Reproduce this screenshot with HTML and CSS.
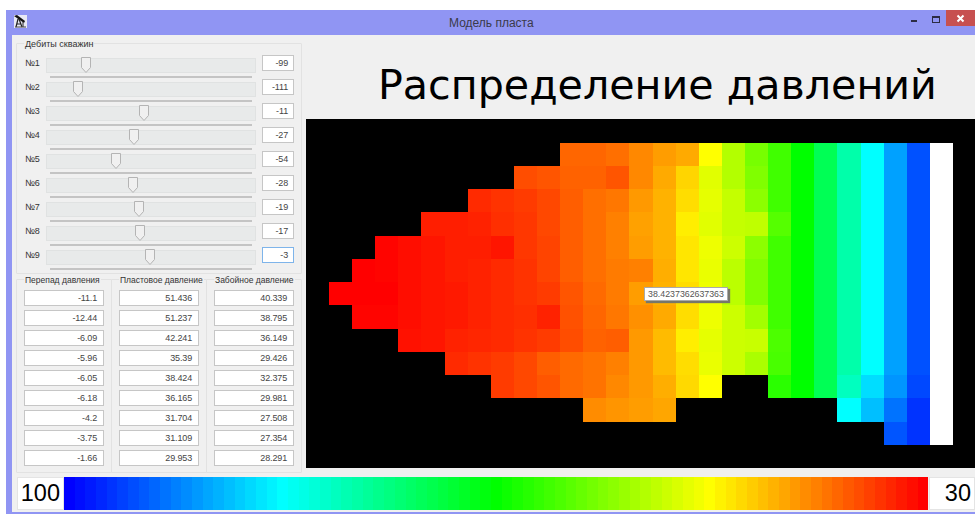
FILE: index.html
```html
<!DOCTYPE html>
<html lang="ru">
<head>
<meta charset="utf-8">
<title>Модель пласта</title>
<link rel="stylesheet" href="styles.css">
</head>
<body>
<div class="window">
  <header class="titlebar">
    <svg class="app-icon" width="13" height="13" viewBox="0 0 13 13">
      <rect width="13" height="13" fill="#e8e8f4"/>
      <path d="M0 1 L3 0 L11 6 L10 8 Z" fill="#111"/>
      <path d="M4 4 L2 12 M5 4 L8 12 M3 9 H7" stroke="#222" stroke-width="1.2" fill="none"/>
      <path d="M9 7 V12 M1 12 H12" stroke="#444" stroke-width="1.2" fill="none"/>
    </svg>
    <span class="window-title">Модель пласта</span>
    <div class="window-controls">
      <span class="ctl-min"></span>
      <span class="ctl-max"></span>
      <span class="ctl-close">
        <svg width="9" height="9" viewBox="0 0 9 9"><path d="M1.5 1.5 L7.5 7.5 M7.5 1.5 L1.5 7.5" stroke="#fff" stroke-width="2"/></svg>
      </span>
    </div>
  </header>

  <main class="client">
    <section class="controls">
      <div class="group wells">
        <div class="group-title">Дебиты скважин</div>
        <div class="well">
          <span>№1</span>
          <div class="slider-box"><div class="slider"><svg class="thumb" style="left:34px" width="10" height="16" viewBox="0 0 10 16"><path d="M.5.5 H9.5 V10.5 L5 15.5 L.5 10.5 Z"/></svg></div><div class="slider-rule"></div></div>
          <div class="field">-99</div>
        </div>
        <div class="well">
          <span>№2</span>
          <div class="slider-box"><div class="slider"><svg class="thumb" style="left:26px" width="10" height="16" viewBox="0 0 10 16"><path d="M.5.5 H9.5 V10.5 L5 15.5 L.5 10.5 Z"/></svg></div><div class="slider-rule"></div></div>
          <div class="field">-111</div>
        </div>
        <div class="well">
          <span>№3</span>
          <div class="slider-box"><div class="slider"><svg class="thumb" style="left:92px" width="10" height="16" viewBox="0 0 10 16"><path d="M.5.5 H9.5 V10.5 L5 15.5 L.5 10.5 Z"/></svg></div><div class="slider-rule"></div></div>
          <div class="field">-11</div>
        </div>
        <div class="well">
          <span>№4</span>
          <div class="slider-box"><div class="slider"><svg class="thumb" style="left:82px" width="10" height="16" viewBox="0 0 10 16"><path d="M.5.5 H9.5 V10.5 L5 15.5 L.5 10.5 Z"/></svg></div><div class="slider-rule"></div></div>
          <div class="field">-27</div>
        </div>
        <div class="well">
          <span>№5</span>
          <div class="slider-box"><div class="slider"><svg class="thumb" style="left:64px" width="10" height="16" viewBox="0 0 10 16"><path d="M.5.5 H9.5 V10.5 L5 15.5 L.5 10.5 Z"/></svg></div><div class="slider-rule"></div></div>
          <div class="field">-54</div>
        </div>
        <div class="well">
          <span>№6</span>
          <div class="slider-box"><div class="slider"><svg class="thumb" style="left:81px" width="10" height="16" viewBox="0 0 10 16"><path d="M.5.5 H9.5 V10.5 L5 15.5 L.5 10.5 Z"/></svg></div><div class="slider-rule"></div></div>
          <div class="field">-28</div>
        </div>
        <div class="well">
          <span>№7</span>
          <div class="slider-box"><div class="slider"><svg class="thumb" style="left:87px" width="10" height="16" viewBox="0 0 10 16"><path d="M.5.5 H9.5 V10.5 L5 15.5 L.5 10.5 Z"/></svg></div><div class="slider-rule"></div></div>
          <div class="field">-19</div>
        </div>
        <div class="well">
          <span>№8</span>
          <div class="slider-box"><div class="slider"><svg class="thumb" style="left:88px" width="10" height="16" viewBox="0 0 10 16"><path d="M.5.5 H9.5 V10.5 L5 15.5 L.5 10.5 Z"/></svg></div><div class="slider-rule"></div></div>
          <div class="field">-17</div>
        </div>
        <div class="well">
          <span>№9</span>
          <div class="slider-box"><div class="slider"><svg class="thumb" style="left:98px" width="10" height="16" viewBox="0 0 10 16"><path d="M.5.5 H9.5 V10.5 L5 15.5 L.5 10.5 Z"/></svg></div><div class="slider-rule"></div></div>
          <div class="field focused">-3</div>
        </div>
      </div>

      <div class="pressure-groups">
        <div class="group pressure">
          <div class="group-title">Перепад давления</div>
          <div class="field">-11.1</div>
          <div class="field">-12.44</div>
          <div class="field">-6.09</div>
          <div class="field">-5.96</div>
          <div class="field">-6.05</div>
          <div class="field">-6.18</div>
          <div class="field">-4.2</div>
          <div class="field">-3.75</div>
          <div class="field">-1.66</div>
        </div>
        <div class="group pressure">
          <div class="group-title">Пластовое давление</div>
          <div class="field">51.436</div>
          <div class="field">51.237</div>
          <div class="field">42.241</div>
          <div class="field">35.39</div>
          <div class="field">38.424</div>
          <div class="field">36.165</div>
          <div class="field">31.704</div>
          <div class="field">31.109</div>
          <div class="field">29.953</div>
        </div>
        <div class="group pressure">
          <div class="group-title">Забойное давление</div>
          <div class="field">40.339</div>
          <div class="field">38.795</div>
          <div class="field">36.149</div>
          <div class="field">29.426</div>
          <div class="field">32.375</div>
          <div class="field">29.981</div>
          <div class="field">27.508</div>
          <div class="field">27.354</div>
          <div class="field">28.291</div>
        </div>
      </div>
    </section>

    <section class="chart">
      <h1 class="chart-title">Распределение давлений</h1>
      <div class="plot">
        <svg id="heatmap" class="heatmap" width="669" height="349" viewBox="0 0 669 349" shape-rendering="crispEdges"></svg>
        <div class="tooltip">38.4237362637363</div>
      </div>
    </section>

    <footer class="legend">
      <div class="legend-end">100</div>
      <div id="scale" class="legend-scale"></div>
      <div class="legend-end">30</div>
    </footer>
  </main>
</div>
<script src="app.js"></script>
</body>
</html>
```

FILE: styles.css
```css
* { box-sizing: border-box; }

html, body {
  margin: 0;
  height: 514px;
  overflow: hidden;
  background: #fff;
}

body {
  padding: 10px 0 0 6px;
  font: 9px/12px "Liberation Sans", Arial, sans-serif;
  color: #333;
}

.window {
  width: 969px;
  height: 504px;
  display: flex;
  flex-direction: column;
  background: #9095f3;
  padding: 0 0 2px 6px;
}

/* Title bar */
.titlebar {
  height: 25px;
  flex: none;
  display: flex;
  align-items: flex-start;
  position: relative;
}

.app-icon {
  margin: 5px 0 0 2px;
}

.window-title {
  position: absolute;
  left: 437px;
  top: 6px;
  font-size: 12px;
  line-height: 14px;
  color: #3a3a4a;
}

.window-controls {
  margin-left: auto;
  display: flex;
  align-items: flex-start;
}

.ctl-min {
  width: 6px;
  height: 2px;
  margin: 10px 15px 0 0;
  background: #2c2c44;
}

.ctl-max {
  width: 8px;
  height: 7px;
  margin: 6px 6px 0 0;
  border: 1px solid #2c2c44;
  border-top-width: 2px;
}

.ctl-close {
  width: 29px;
  height: 16px;
  background: #c75050;
  display: flex;
  align-items: center;
  justify-content: center;
}

/* Client area */
.client {
  flex: 1;
  background: #f0f0f0;
  display: grid;
  grid-template-columns: 294px 1fr;
  grid-template-rows: 442px 32px;
}

.controls {
  padding: 8px 0 0 4px;
}

.group {
  border: 1px solid #e2e2e2;
  border-radius: 1px;
}

.group-title {
  width: fit-content;
  margin: -6px 0 5px 7px;
  padding: 0 1px;
  height: 12px;
  background: #f0f0f0;
  color: #333;
  white-space: nowrap;
}

/* Well rate sliders */
.wells {
  width: 286px;
  height: 231px;
}

.well {
  height: 24px;
  display: grid;
  grid-template-columns: 21px 210px 31px;
  padding-left: 8px;
}

.well > span {
  margin-top: 1px;
  line-height: 14px;
}

.slider-box {
  margin-top: 3px;
  width: 210px;
}

.slider {
  position: relative;
  height: 15px;
  background: #e8eaea;
  border: 1px solid #e0e2e2;
}

.thumb {
  position: absolute;
  top: -2px;
  overflow: visible;
}

.thumb path {
  fill: #f0f0f0;
  stroke: #b4b4b4;
  stroke-width: 1;
}

.slider-rule {
  height: 2px;
  margin: 3px 4px 0;
  background: #c4c4c4;
}

.field {
  height: 16px;
  background: #fff;
  border: 1px solid #c6c6c6;
  padding-right: 5px;
  text-align: right;
  line-height: 14px;
  letter-spacing: -.15px;
  color: #444;
}

.well .field {
  width: 32px;
  margin-left: 6px;
}

.well .focused {
  border-color: #7eb4ea;
}

/* Pressure columns */
.pressure-groups {
  margin-top: 5px;
  display: grid;
  grid-template-columns: repeat(3, 95px);
  width: 286px;
}

.pressure {
  height: 194px;
  padding: 0 7px;
  margin-right: -1px;
  display: flex;
  flex-direction: column;
  gap: 4px;
}

.pressure .group-title {
  margin: -6px 0 0 0;
  height: 12px;
  font-size: 8.5px;
}

.pressure .field {
  height: 16px;
  flex: none;
  width: 80px;
  padding-right: 6px;
}

/* Heat map */
.chart {
  display: flex;
  flex-direction: column;
  min-width: 0;
}

.chart-title {
  height: 84px;
  margin: 0;
  padding: 22px 0 0 72px;
  font: 400 41.2px/56px "DejaVu Sans", "Open Sans", sans-serif;
  color: #000;
  white-space: nowrap;
}

.plot {
  position: relative;
  height: 349px;
  background: #000;
}

.heatmap {
  display: block;
}

.tooltip {
  position: absolute;
  left: 338px;
  top: 168px;
  width: 84px;
  height: 14px;
  background: #fff;
  border: 1px solid #aaa;
  box-shadow: 2px 2px 1px #77776a;
  font-size: 8.8px;
  line-height: 12px;
  text-align: center;
  color: #555;
}

/* Colour scale */
.legend {
  grid-column: 1 / -1;
  display: grid;
  grid-template-columns: 47px 865px 46px;
  padding-left: 5px;
  height: 32px;
}

.legend-end {
  background: #fff;
  border: 1px solid #e4e4e4;
  padding-right: 3px;
  font: 23.5px/31px "Liberation Sans", Arial, sans-serif;
  text-align: right;
  color: #000;
  white-space: nowrap;
}

.legend-scale {
  display: flex;
}

.legend-scale span {
  flex: 1;
}
```

FILE: app.js
```js
// Pressure field, stored as hue per cell: each row is [first column, hues...].
// A null entry is an empty cell; the last column is the white boundary.
const EDGE = [105, 120, 140, 160, 180, 202, 221];
const rows = [
  [10, 24, 24, 26, 32, 37, 40, 60, 78, 92, ...EDGE],
  [8, 18, 20, 23, 23, 20, 32, 40, 50, 67, 78, 90, ...EDGE],
  [6, 10, 12, 14, 17, 22, 26, 28, 36, 42, 52, 66, 74, 87, ...EDGE],
  [4, 7, 7, 8, 11, 13, 17, 22, 26, 30, 38, 42, 56, 67, 74, 75, 100, 120, 140, 160, 180, 202, 221],
  [2, 1, 3, 5, 7, 7, 5, 13, 16, 22, 26, 30, 37, 42, 54, 64, 72, 87, ...EDGE],
  [1, 0, 1, 3, 5, 7, 8, 10, 12, 16, 22, 26, 29, 30, 41, 54, 65, 76, 90, ...EDGE],
  [0, 0, 0, 0, 3, 5, 6, 8, 10, 12, 14, 20, 25, 29, 37, 42, 52, 64, 76, 90, ...EDGE],
  [1, 1, 1, 3, 5, 6, 8, 10, 11, 8, 19, 24, 28, 34, 40, 52, 64, 72, 82, ...EDGE],
  [3, 4, 5, 8, 9, 10, 12, 14, 18, 23, 22, 36, 44, 56, 66, 72, 73, 102, 120, 140, 160, 180, 202, 221],
  [5, 10, 12, 14, 17, 22, 25, 27, 30, 36, 44, 52, 65, 72, 80, 103, 120, 140, 160, 180, 202, 221],
  [7, 14, 17, 20, 25, 27, 32, 36, 41, 51, 60, null, null, 110, 120, 140, 165, 188, 205, 223],
  [11, 33, 35, 37, 39, null, null, null, null, null, null, null, 180, 195, 213, 228],
  [24, 220, 228]
];

const ORIGIN_X = 23, ORIGIN_Y = 23.5, CELL_W = 23.11, CELL_H = 23.27, BOUNDARY_COL = 26;
const SVG_NS = "http://www.w3.org/2000/svg";
const heatmap = document.getElementById("heatmap");

function addCell(row, col, fill) {
  const x0 = Math.round(ORIGIN_X + col * CELL_W);
  const x1 = Math.round(ORIGIN_X + (col + 1) * CELL_W);
  const y0 = Math.round(ORIGIN_Y + row * CELL_H);
  const y1 = Math.round(ORIGIN_Y + (row + 1) * CELL_H);
  const rect = document.createElementNS(SVG_NS, "rect");
  rect.setAttribute("x", x0);
  rect.setAttribute("y", y0);
  rect.setAttribute("width", x1 - x0);
  rect.setAttribute("height", y1 - y0);
  rect.setAttribute("fill", fill);
  heatmap.appendChild(rect);
}

rows.forEach(([first, ...hues], row) => {
  hues.forEach((hue, i) => {
    if (hue !== null) addCell(row, first + i, `hsl(${hue},100%,50%)`);
  });
  addCell(row, BOUNDARY_COL, "#fff");
});

// Colour scale: evenly stepped from blue to red.
const STEPS = 81;
const scale = document.getElementById("scale");
for (let i = 0; i < STEPS; i++) {
  const band = document.createElement("span");
  band.style.background = `hsl(${240 - (240 * i) / (STEPS - 1)},100%,50%)`;
  scale.appendChild(band);
}
```
